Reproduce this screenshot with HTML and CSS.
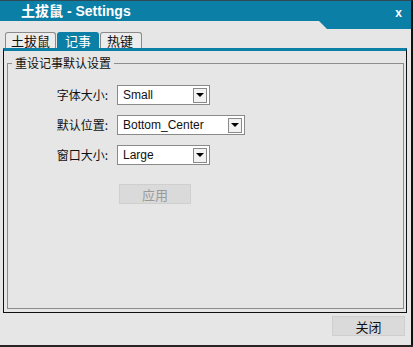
FILE: index.html
```html
<!DOCTYPE html>
<html lang="zh-CN">
<head>
  <meta charset="UTF-8">
  <title>土拔鼠 - Settings</title>
  <link rel="stylesheet" href="styles.css">
</head>
<body>
  <div class="window">
    <div class="titlebar">
      <span class="title">土拔鼠 - Settings</span>
      <span class="close-x">x</span>
    </div>

    <div class="tabs">
      <div class="tab">土拔鼠</div>
      <div class="tab active">记事</div>
      <div class="tab last">热键</div>
    </div>

    <div class="panel">
      <fieldset class="group">
        <legend>重设记事默认设置</legend>
        <div class="form">
          <label>字体大小:</label>
          <div class="combo"><span>Small</span><i class="arrow"></i></div>
          <label>默认位置:</label>
          <div class="combo wide"><span>Bottom_Center</span><i class="arrow"></i></div>
          <label>窗口大小:</label>
          <div class="combo"><span>Large</span><i class="arrow"></i></div>
        </div>
        <button class="btn apply" disabled>应用</button>
      </fieldset>
    </div>

    <div class="footer">
      <button class="btn">关闭</button>
    </div>
  </div>
</body>
</html>
```

FILE: styles.css
```css
body {
  margin: 0;
  background: #2a2326;
  font-family: "Noto Sans CJK SC", "Liberation Sans", sans-serif;
  font-size: 12px;
  color: #111;
}
.window {
  width: 413px;
  height: 345px;
  background: #e6e6e6;
  box-sizing: border-box;
  border-top: 1px solid #2d4a55;
  border-right: 2px solid #111;
}
.titlebar {
  height: 28px;
  background: #0c7fa6;
  clip-path: polygon(0 0, 100% 0, 100% 100%, 327px 100%, 319px 20px, 0 20px);
  display: flex;
  align-items: flex-start;
  justify-content: space-between;
  padding: 0 9px 0 21px;
  color: #fff;
}
.title {
  font-weight: bold;
  font-size: 14px;
  line-height: 21px;
  font-family: "Liberation Sans", "Noto Sans CJK SC", sans-serif;
}
.close-x {
  font-weight: bold;
  font-size: 12px;
  line-height: 24px;
  font-family: "Liberation Sans", sans-serif;
}
.tabs {
  display: flex;
  padding-left: 5px;
  margin-top: 3px;
}
.tab {
  height: 15px;
  line-height: 16px;
  padding: 0 5px;
  border: 1px solid #8a8a8a;
  border-bottom: none;
  border-radius: 3px 3px 0 0;
  font-size: 13px;
  margin-right: 1px;
  background: #ececec;
}
.tab.active {
  background: #0c7fa6;
  color: #fff;
  border-color: #0c7fa6;
  padding: 0 7px;
}
.tab.last {
  padding: 0 8px 0 6px;
}
.panel {
  height: 265px;
  box-sizing: border-box;
  margin: 0 4px 0 3px;
  border: 1px solid #111;
  border-top: 3px solid #0c7fa6;
  display: flex;
  flex-direction: column;
}
.group {
  flex: 1;
  margin: 4px 2px 3px 3px;
  padding: 0 0 0 8px;
  border: 1px solid #8c8c8c;
  min-width: 0;
}
.group legend {
  font-size: 12px;
  padding: 0 3px;
  margin-left: -4px;
  line-height: 16px;
}
.form {
  display: grid;
  grid-template-columns: 92px auto;
  column-gap: 9px;
  row-gap: 10px;
  margin-top: 14px;
  justify-items: start;
  align-items: center;
}
.form label {
  justify-self: end;
  font-size: 12px;
  line-height: 20px;
}
.combo {
  width: 93px;
  height: 20px;
  box-sizing: border-box;
  border: 1px solid #8a8a8a;
  background: #fff;
  display: flex;
  align-items: center;
  justify-content: space-between;
  padding: 0 2px 0 5px;
  font-family: "Liberation Sans", sans-serif;
  font-size: 12px;
}
.combo.wide {
  width: 128px;
}
.arrow {
  width: 14px;
  height: 15px;
  box-sizing: border-box;
  border: 1px solid #8a8a8a;
  background: #f2f2f2;
  display: flex;
  align-items: center;
  justify-content: center;
}
.arrow::after {
  content: "";
  border-left: 4px solid transparent;
  border-right: 4px solid transparent;
  border-top: 4px solid #000;
}
.btn {
  width: 73px;
  height: 20px;
  padding: 0;
  border: 1px solid #cfcfcf;
  background: #dadada;
  font-family: "Noto Sans CJK SC", sans-serif;
  font-size: 13px;
  color: #111;
}
.apply {
  display: block;
  margin: 19px 0 0 103px;
  width: 72px;
  color: #9a9a9a;
}
.footer {
  display: flex;
  justify-content: flex-end;
  padding: 3px 6px 0 0;
}
```
